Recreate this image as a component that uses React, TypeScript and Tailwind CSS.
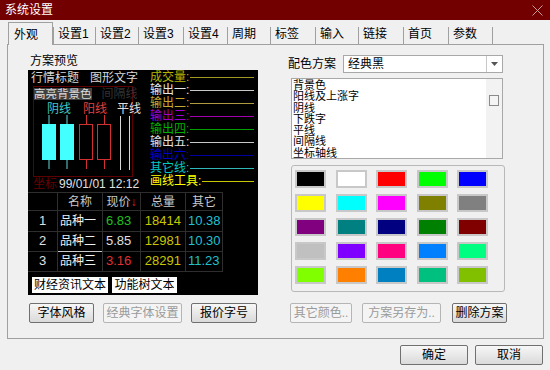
import React from "react";

const F = "font-['Liberation_Sans','Noto_Sans_CJK_SC',sans-serif]";

function Btn({ label, w, disabled }: { label: string; w: string; disabled?: boolean }) {
  return (
    <div
      className={`${w} h-[20px] flex items-center justify-center text-[12px] leading-[14px] whitespace-nowrap rounded-[2px] border ${
        disabled
          ? "border-[#b5b5b5] bg-[#f4f4f4] text-[#9a9a9a]"
          : "border-[#707070] bg-linear-to-b from-[#f7f7f7] to-[#dadada] text-black"
      }`}
    >
      {label}
    </div>
  );
}

const tabs: { t: string; w: string }[] = [
  { t: "设置1", w: "w-[42px]" },
  { t: "设置2", w: "w-[43px]" },
  { t: "设置3", w: "w-[45px]" },
  { t: "设置4", w: "w-[44px]" },
  { t: "周期", w: "w-[43px]" },
  { t: "标签", w: "w-[45px]" },
  { t: "输入", w: "w-[43px]" },
  { t: "链接", w: "w-[45px]" },
  { t: "首页", w: "w-[45px]" },
  { t: "参数", w: "w-[44px]" },
];

const legend: { t: string; tc: string; lc: string }[] = [
  { t: "成交量:", tc: "text-[#b4b400]", lc: "bg-[#a09a20]" },
  { t: "输出一:", tc: "text-[#e8e8e8]", lc: "bg-[#c8c8c8]" },
  { t: "输出二:", tc: "text-[#c8a830]", lc: "bg-[#b09a40]" },
  { t: "输出三:", tc: "text-[#a000d0]", lc: "bg-[#a000b0]" },
  { t: "输出四:", tc: "text-[#00b000]", lc: "bg-[#00a000]" },
  { t: "输出五:", tc: "text-[#e0e0e0]", lc: "bg-[#c8c8c8]" },
  { t: "输出六:", tc: "text-[#0000d0]", lc: "bg-[#0000a0]" },
  { t: "其它线:", tc: "text-[#00c8c8]", lc: "bg-[#30b8b8]" },
  { t: "画线工具:", tc: "text-[#ffff00]", lc: "bg-[#c8c800]" },
];

const rows = [
  { n: "1", name: "品种一", p: "6.83", pc: "text-[#20c020]", v: "18414", o: "10.38" },
  { n: "2", name: "品种二", p: "5.85", pc: "text-[#e0e0e0]", v: "12981", o: "10.30" },
  { n: "3", name: "品种三", p: "3.16", pc: "text-[#e03030]", v: "28291", o: "11.23" },
];

const swatches = [
  "bg-[#000000]", "bg-[#ffffff]", "bg-[#ff0000]", "bg-[#00ff00]", "bg-[#0000ff]",
  "bg-[#ffff00]", "bg-[#00ffff]", "bg-[#ff00ff]", "bg-[#808000]", "bg-[#808080]",
  "bg-[#800080]", "bg-[#008080]", "bg-[#000080]", "bg-[#008000]", "bg-[#800000]",
  "bg-[#c0c0c0]", "bg-[#8000ff]", "bg-[#ff0080]", "bg-[#0080ff]", "bg-[#00ff80]",
  "bg-[#80ff00]", "bg-[#ff8000]", "bg-[#0080c0]", "bg-[#00c080]", "bg-[#80c000]",
];

const listItems = ["背景色", "阳线及上涨字", "阴线", "下跌字", "平线", "间隔线", "坐标轴线"];

function Preview() {
  return (
    <div className="w-[230px] h-[225px] bg-black flex flex-col text-[12px] whitespace-nowrap">
      <div className="flex h-[122px]">
        {/* left part */}
        <div className="w-[118px] shrink-0 flex flex-col">
          <div className="flex mt-[1px] h-[15px] leading-[14px] text-[#d8d8d8]">
            <span className="w-[62px] shrink-0 pl-[3px]">行情标题</span>
            <span className="shrink-0">图形文字</span>
          </div>
          <div className="relative ml-[5px] w-[100px] h-[91px] border border-[#5c0000]">
            <div className="flex items-start">
              <span className="shrink-0 bg-[#404040] text-[#dcdcdc] h-[12px] leading-[12px] mt-[1px] text-[11.5px]">高亮背景色</span>
              <span className="shrink-0 ml-[10px] mt-[1px] leading-[12px] text-[#333333]">间隔线</span>
            </div>
            <div className="flex leading-[14px] mt-[2px]">
              <span className="shrink-0 pl-[13px] text-[#40c8c8]">阴线</span>
              <span className="shrink-0 ml-[12px] text-[#e04040]">阳线</span>
              <span className="shrink-0 ml-[10px] text-[#e0e0e0]">平线</span>
            </div>
            <svg className="absolute left-0 top-0" width="98" height="89" viewBox="0 0 98 89">
              <line x1="15" y1="28" x2="15" y2="82" stroke="#60d8d8" strokeWidth="1" />
              <rect x="8" y="37" width="14" height="36" fill="#44ffff" />
              <line x1="33" y1="28" x2="33" y2="82" stroke="#60d8d8" strokeWidth="1" />
              <rect x="26" y="37" width="14" height="36" fill="#44ffff" />
              <line x1="52.5" y1="28" x2="52.5" y2="82" stroke="#d03030" strokeWidth="1" />
              <rect x="45.5" y="37.5" width="13" height="35" fill="#000" stroke="#d03030" strokeWidth="1" />
              <line x1="70.5" y1="28" x2="70.5" y2="82" stroke="#d03030" strokeWidth="1" />
              <rect x="63.5" y="37.5" width="13" height="35" fill="#000" stroke="#d03030" strokeWidth="1" />
              <line x1="86.5" y1="29" x2="86.5" y2="83" stroke="#d8d8d8" strokeWidth="1" />
              <line x1="95.5" y1="29" x2="95.5" y2="83" stroke="#d8d8d8" strokeWidth="1" />
            </svg>
          </div>
          <div className="flex h-[14px] leading-[14px] pl-[5px]">
            <span className="shrink-0 text-[#6a0000]">坐标</span>
            <span className="shrink-0 ml-[2px] text-[#e0e0e0]">99/01/01 12:12</span>
          </div>
        </div>
        {/* legend */}
        <div className="flex-1 flex flex-col pl-[4px] pr-[4px] pt-[1px]">
          {legend.map((l) => (
            <div key={l.t} className="flex items-center h-[13px]">
              <span className={`${l.tc} shrink-0 leading-[13px]`}>{l.t}</span>
              <div className={`flex-1 h-px ml-[1px] ${l.lc}`} />
            </div>
          ))}
        </div>
      </div>
      {/* table */}
      <div className="w-[195px] flex flex-col border-t border-[#2e2e2e]">
        <div className="grid grid-cols-[30px_45px_38px_45px_37px] h-[18px] text-[#c8c8c8]">
          <div className="border-r border-b border-[#2e2e2e]" />
          <div className="border-r border-b border-[#2e2e2e] flex items-center justify-center leading-[14px]">名称</div>
          <div className="border-r border-b border-[#2e2e2e] flex items-center justify-center leading-[14px]">
            现价<span className="text-[#e02020]">↓</span>
          </div>
          <div className="border-r border-b border-[#2e2e2e] flex items-center justify-center leading-[14px]">总量</div>
          <div className="border-r border-b border-[#2e2e2e] flex items-center justify-center leading-[14px]">其它</div>
        </div>
        {rows.map((r, i) => (
          <div key={r.n} className="grid grid-cols-[30px_45px_38px_45px_37px] h-[20px] text-[13px]">
            <div className="border-r border-b border-[#2e2e2e] flex items-center justify-center text-[#e0e0e0]">{r.n}</div>
            <div
              className={`border-r border-b ${i === 1 ? "border-b-[#c8c8c8]" : "border-b-[#2e2e2e]"} border-r-[#2e2e2e] flex items-center pl-[2px] text-[12px] text-[#f0f0f0]`}
            >
              {r.name}
            </div>
            <div className={`border-r border-b border-[#2e2e2e] flex items-center pl-[3px] ${r.pc}`}>{r.p}</div>
            <div className="border-r border-b border-[#2e2e2e] flex items-center justify-end pr-[4px] text-[#c8c800]">{r.v}</div>
            <div className="border-r border-b border-[#2e2e2e] flex items-center pl-[2px] text-[#20c0d0]">{r.o}</div>
          </div>
        ))}
      </div>
      <div className="flex gap-[4px] pl-[4px] mt-[6px]">
        <div className="w-[76px] h-[16px] bg-white text-black leading-[16px] text-center">财经资讯文本</div>
        <div className="w-[65px] h-[16px] bg-white text-black leading-[16px] text-center">功能树文本</div>
      </div>
    </div>
  );
}

export default function App() {
  return (
    <div className={`w-[550px] h-[370px] bg-[#f0f0f0] flex flex-col overflow-hidden ${F} text-[12px] text-black`}>
      {/* title bar */}
      <div className="h-[20px] bg-[#730000] flex items-center justify-between pl-[5px] pr-[7px]">
        <span className="text-white leading-[14px]">系统设置</span>
        <svg width="11" height="11" viewBox="0 0 11 11">
          <line x1="0.5" y1="0.5" x2="10.5" y2="10.5" stroke="#c89a9a" strokeWidth="1" />
          <line x1="10.5" y1="0.5" x2="0.5" y2="10.5" stroke="#c89a9a" strokeWidth="1" />
        </svg>
      </div>
      {/* tabs */}
      <div className="flex items-end h-[22px] mt-[2px] pl-[8px] relative z-10">
        <div className="w-[45px] h-[23px] -mb-px border-l border-t border-r border-[#a0a0a0] bg-[#f0f0f0] pl-[5px] pt-[5px] leading-[14px]">
          外观
        </div>
        {tabs.map((t) => (
          <div key={t.t} className={`${t.w} h-[17px] border-l border-[#a0a0a0] pl-[4px] leading-[14px]`}>
            {t.t}
          </div>
        ))}
        <div className="h-[17px] border-l border-[#a0a0a0]" />
      </div>
      {/* panel */}
      <div className="ml-[7px] w-[537px] h-[295px] border border-[#a0a0a0] flex pl-[20px] pt-[8px]">
        <div className="w-[230px] flex flex-col">
          <div className="h-[16px] leading-[16px] pl-[2px]">方案预览</div>
          <div className="mt-[1px]">
            <Preview />
          </div>
          <div className="flex mt-[8px] ml-[1px] gap-[9px]">
            <Btn label="字体风格" w="w-[65px]" />
            <Btn label="经典字体设置" w="w-[79px]" disabled />
            <Btn label="报价字号" w="w-[66px]" />
          </div>
        </div>
        <div className="ml-[30px] w-[220px] flex flex-col">
          <div className="flex items-center h-[18px] mt-[2px]">
            <span className="w-[55px] leading-[14px]">配色方案</span>
            <div className="w-[160px] h-[18px] bg-white border border-[#a8a8a8] flex">
              <span className="flex-1 pl-[4px] leading-[16px]">经典黑</span>
              <div className="w-[16px] border-l border-[#c8c8c8] flex items-center justify-center">
                <svg width="7" height="4" viewBox="0 0 7 4">
                  <path d="M0 0 H7 L3.5 4 Z" fill="#555" />
                </svg>
              </div>
            </div>
          </div>
          <div className="mt-[5px] ml-[3px] w-[212px] h-[81px] bg-white border border-[#a8a8a8] flex overflow-hidden">
            <div className="flex-1 pl-[1px] pt-[1px] leading-[11.3px] text-[11px]">
              {listItems.map((it) => (
                <div key={it}>{it}</div>
              ))}
            </div>
            <div className="w-[16px] bg-[#f2f2f2] flex flex-col items-center pt-[16px]">
              <div className="w-[10px] h-[11px] border border-[#8a8a8a] bg-[#f4f4f4]" />
            </div>
          </div>
          <div className="mt-[6px] ml-[3px] w-[214px] h-[127px] border border-[#b8b8b8] rounded-[3px] pl-[3px] pt-[4px]">
            <div className="grid grid-cols-[31px_31px_31px_31px_31px] gap-x-[9.5px] gap-y-[6px]">
              {swatches.map((s, i) => (
                <div key={i} className={`h-[18px] border-2 border-[#c8c8c8] ${s}`} />
              ))}
            </div>
          </div>
          <div className="flex mt-[11px] ml-[2px]">
            <Btn label="其它颜色.." w="w-[62px]" disabled />
            <div className="ml-[10px]">
              <Btn label="方案另存为.." w="w-[79px]" disabled />
            </div>
            <div className="ml-[11px]">
              <Btn label="删除方案" w="w-[55px]" />
            </div>
          </div>
        </div>
      </div>
      {/* bottom */}
      <div className="flex justify-end gap-[7px] pr-[7px] mt-[6px]">
        <Btn label="确定" w="w-[68px]" />
        <Btn label="取消" w="w-[68px]" />
      </div>
    </div>
  );
}
